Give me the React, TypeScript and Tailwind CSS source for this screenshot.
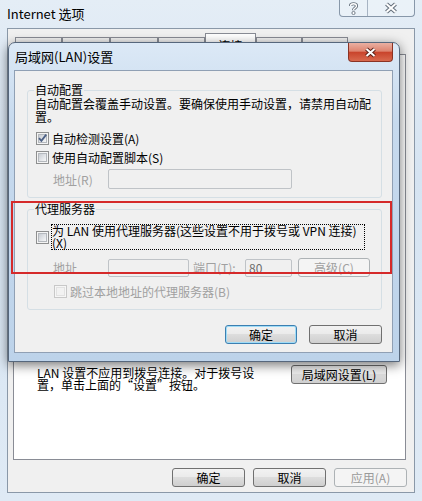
import clsx from 'clsx'

const CJK = "font-['Noto_Sans_CJK_SC','Noto_Sans',sans-serif]"

const tabs = [
  { label: '常规', w: 'w-[47px]' },
  { label: '安全', w: 'w-[48px]' },
  { label: '隐私', w: 'w-[48px]' },
  { label: '内容', w: 'w-[47px]' },
  { label: '连接', w: 'w-[51px]', active: true },
  { label: '程序', w: 'w-[46px]' },
  { label: '高级', w: 'w-[46px]' },
]

function Btn({
  children,
  className = '',
  primary = false,
  disabled = false,
}: {
  children: React.ReactNode
  className?: string
  primary?: boolean
  disabled?: boolean
}) {
  return (
    <div
      className={clsx(
        'flex h-[19px] shrink-0 items-center justify-center rounded-[3px] border text-[12px] leading-none',
        disabled
          ? 'border-[#adb2b5] bg-[#f4f4f4] text-[#9a9a9a]'
          : primary
            ? 'border-[#3c7fb1] bg-[linear-gradient(180deg,#f2f2f2_0%,#ebebeb_45%,#dddddd_50%,#cfcfcf_100%)] shadow-[inset_0_0_0_1px_#9fdcf7]'
            : 'border-[#707070] bg-[linear-gradient(180deg,#f2f2f2_0%,#ebebeb_45%,#dddddd_50%,#cfcfcf_100%)]',
        className,
      )}
    >
      {children}
    </div>
  )
}

function CheckBox({ checked = false, disabled = false }: { checked?: boolean; disabled?: boolean }) {
  return (
    <span
      className={clsx(
        'flex h-[13px] w-[13px] shrink-0 items-center justify-center border',
        disabled ? 'border-[#c8c8c8] bg-[#f6f6f6]' : 'border-[#8e8f8f] bg-[#f4f4f4]',
      )}
    >
      <span
        className={clsx(
          'flex h-[9px] w-[9px] items-center justify-center overflow-visible border',
          disabled
            ? 'border-[#e2e2e2] bg-[#f2f2f2]'
            : 'border-[#b4b8bd] bg-[linear-gradient(135deg,#c9cdd3_0%,#e4e6e9_60%,#f7f7f7_100%)]',
        )}
      >
        {checked && (
          <svg width="9" height="9" viewBox="0 0 9 9" className="overflow-visible">
            <path d="M1 4.2 L3.4 6.8 L8.2 0.6" fill="none" stroke="#4d6185" strokeWidth="1.8" />
          </svg>
        )}
      </span>
    </span>
  )
}

function Field({ className = '', children }: { className?: string; children?: React.ReactNode }) {
  return (
    <div
      className={clsx(
        'flex shrink-0 items-center rounded-[2px] border border-[#bfc3c7] bg-[#f0f0f0] pl-[3px] text-[12px] text-[#6d6d6d]',
        className,
      )}
    >
      {children}
    </div>
  )
}

export default function App() {
  return (
    <div
      className={`relative h-[501px] w-[422px] overflow-hidden bg-[linear-gradient(180deg,#e4edf6_0%,#d6e4f2_35%,#dfeaf5_100%)] text-black ${CJK}`}
    >
      {/* ── Internet 选项 title bar ── */}
      <div className="flex h-[28px] items-start">
        <div className="pl-[7px] pt-[5px] text-[13px] leading-[18px]">Internet 选项</div>
        <div className="ml-auto mr-[7px] flex h-[17px] w-[76px] rounded-b-[4px] border border-t-0 border-[#8797a9] bg-[#edf3f9]/70">
          <div className="flex w-[28px] items-center justify-center border-r border-[#a7b4c3]">
            <svg width="9" height="13" viewBox="0 0 9 13">
              <path d="M1.5 4 C1.5 1 7.5 1 7.5 4 C7.5 6 4.5 6 4.5 8.2" fill="none" stroke="#66717d" strokeWidth="3.2" />
              <path d="M1.5 4 C1.5 1 7.5 1 7.5 4 C7.5 6 4.5 6 4.5 8.2" fill="none" stroke="#fff" strokeWidth="1.4" />
              <circle cx="4.5" cy="11" r="1.6" fill="#fff" stroke="#66717d" strokeWidth="0.9" />
            </svg>
          </div>
          <div className="flex flex-1 items-center justify-center">
            <svg width="14" height="12" viewBox="0 0 14 12">
              <path d="M2.5 2 L11.5 10 M11.5 2 L2.5 10" stroke="#66717d" strokeWidth="4.2" />
              <path d="M2.5 2 L11.5 10 M11.5 2 L2.5 10" stroke="#fff" strokeWidth="2" />
            </svg>
          </div>
        </div>
      </div>

      {/* ── Internet 选项 client ── */}
      <div className="mx-[7px] flex h-[465px] flex-col border border-[#8a98a8] bg-[#f0f0f0]">
        <div className="ml-[7px] mt-[4px] flex h-[21px] items-end text-[12px] leading-none">
          {tabs.map(t => (
            <div
              key={t.label}
              className={clsx(
                'flex items-start justify-center border border-b-0 border-[#898c95] pt-[6px]',
                t.w,
                t.active
                  ? 'h-[21px] bg-white'
                  : 'h-[17px] bg-[linear-gradient(180deg,#f2f2f2,#dedede)] pt-[4px]',
              )}
            >
              {t.label}
            </div>
          ))}
        </div>
        <div className="ml-[5px] mr-[8px] h-[406px] border border-[#898c95] bg-white pl-[23px] pr-[18px] pt-[310px]">
          <div className="flex items-start justify-between">
            <p className="mt-[2px] text-[12px] leading-[12px]">
              LAN 设置不应用到拨号连接。对于拨号设
              <br />
              置，单击上面的“设置”按钮。
            </p>
            <Btn className="w-[96px]">局域网设置(L)</Btn>
          </div>
        </div>
        <div className="mt-[8px] flex justify-end gap-[8px] pr-[7px]">
          <Btn className="w-[73px]">确定</Btn>
          <Btn className="w-[73px]">取消</Btn>
          <Btn className="w-[73px]" disabled>
            应用(A)
          </Btn>
        </div>
      </div>

      {/* ── 局域网(LAN)设置 dialog ── */}
      <div className="absolute left-[8px] top-[42px] flex h-[320px] w-[392px] flex-col rounded-t-[7px] border border-[#56677c] bg-[linear-gradient(180deg,#dce9f6_0%,#c7daee_25%,#bdd3ea_100%)] shadow-[0_3px_12px_rgba(0,0,0,0.55)]">
        <div className="flex h-[27px] shrink-0">
          <div className="self-center pl-[6px] text-[13px] leading-[16px]">局域网(LAN)设置</div>
          <div className="ml-auto mr-[6px] flex h-[19px] w-[45px] items-center justify-center rounded-b-[4px] border border-t-0 border-[#8b3324] bg-[linear-gradient(180deg,#eab0a2_0%,#de8470_45%,#c9442c_52%,#d8694e_100%)]">
            <svg width="13" height="11" viewBox="0 0 13 11">
              <path d="M2.5 2 L10.5 9 M10.5 2 L2.5 9" stroke="#5b2118" strokeWidth="4" />
              <path d="M2.5 2 L10.5 9 M10.5 2 L2.5 9" stroke="#fff" strokeWidth="2" />
            </svg>
          </div>
        </div>

        <div className="mb-[8px] ml-[5px] mr-[6px] flex flex-1 flex-col border border-[#90a0b4] bg-[#f0f0f0] text-[12px] leading-[13px]">
          {/* 自动配置 */}
          <fieldset className="ml-[12px] mt-[12px] w-[355px] rounded-[3px] border border-[#d5dfe5] pb-[8px] pl-[7px]">
            <legend className="-ml-[1px] px-[1px] leading-[14px]">自动配置</legend>
            <p className="leading-[13px]">
              自动配置会覆盖手动设置。要确保使用手动设置，请禁用自动配
              <br />
              置。
            </p>
            <label className="ml-[1px] mt-[9px] flex h-[13px] items-center gap-[3px]">
              <CheckBox checked />
              <span>自动检测设置(A)</span>
            </label>
            <label className="ml-[1px] mt-[6px] flex h-[13px] items-center gap-[3px]">
              <CheckBox />
              <span>使用自动配置脚本(S)</span>
            </label>
            <div className="ml-[18px] mt-[5px] flex h-[20px] items-center text-[#a0a0a0]">
              <span className="w-[55px]">地址(R)</span>
              <Field className="h-[20px] w-[184px]" />
            </div>
          </fieldset>

          {/* 代理服务器 */}
          <fieldset className="ml-[12px] mt-[4px] w-[355px] rounded-[3px] border border-[#d5dfe5] pb-[11px] pl-[7px]">
            <legend className="-ml-[1px] px-[1px] leading-[14px]">代理服务器</legend>
            <div className="ml-[1px] mt-[8px] flex items-center gap-[2px]">
              <CheckBox />
              <span className="w-[314px] whitespace-nowrap border border-dotted border-black leading-[12px]">
                为 LAN 使用代理服务器(这些设置不用于拨号或 VPN 连接)
                <br />
                (X)
              </span>
            </div>
            <div className="ml-[18px] mt-[8px] flex h-[19px] items-center text-[#a0a0a0]">
              <span className="w-[55px]">地址</span>
              <Field className="h-[18px] w-[81px]" />
              <span className="ml-[4px] w-[52px]">端口(T):</span>
              <Field className="h-[18px] w-[47px]">80</Field>
              <div className="ml-[6px] flex h-[19px] w-[72px] items-center justify-center rounded-[3px] border border-[#adb2b5] bg-[#f4f4f4]">
                高级(C)
              </div>
            </div>
            <label className="ml-[19px] mt-[8px] flex h-[13px] items-center gap-[3px] text-[#a0a0a0]">
              <CheckBox disabled />
              <span>跳过本地地址的代理服务器(B)</span>
            </label>
          </fieldset>

          <div className="mt-auto flex justify-end gap-[12px] pb-[8px] pr-[10px]">
            <Btn className="w-[72px]" primary>
              确定
            </Btn>
            <Btn className="w-[73px]">取消</Btn>
          </div>
        </div>
      </div>

      {/* ── red annotation box ── */}
      <div className="absolute left-[11px] top-[201px] h-[73px] w-[381px] border-2 border-[#d52a2a]" />
    </div>
  )
}
